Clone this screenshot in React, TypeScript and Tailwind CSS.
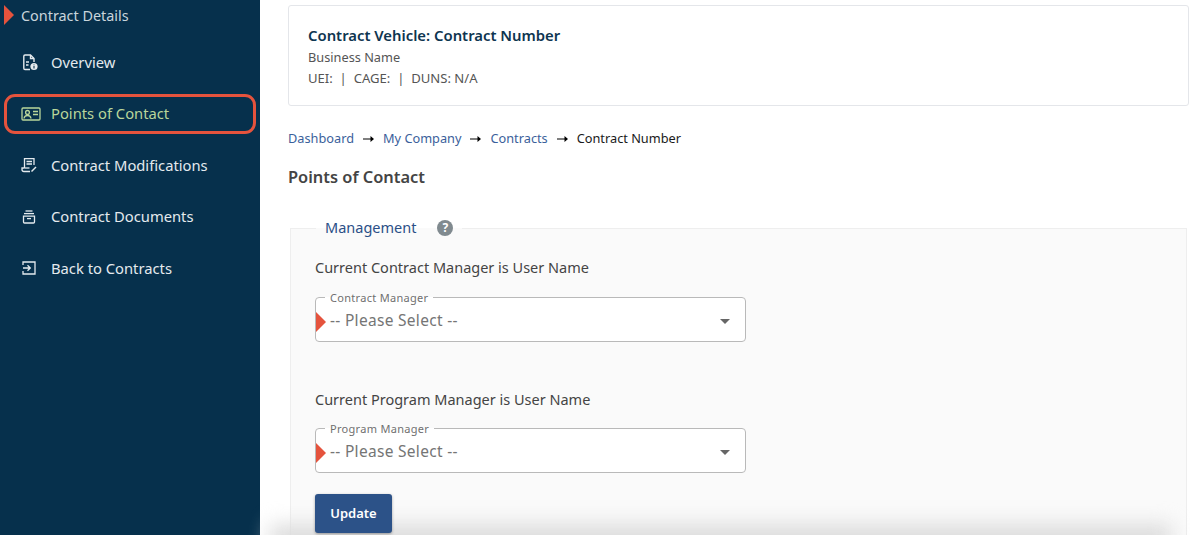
import React from "react";

const font = { fontFamily: '"Noto Sans", sans-serif' };

function OverviewIcon() {
  return (
    <svg width="16" height="17" viewBox="0 0 16 17" fill="none" stroke="currentColor" strokeWidth="1.4" className="ml-[1px]">
      <path d="M8 15.5H3a1.2 1.2 0 0 1-1.2-1.2V2.2A1.2 1.2 0 0 1 3 1h5.5L12 4.5V8" />
      <path d="M8.5 1v3.5H12" />
      <path d="M4 8h3M4 11h2.5" />
      <circle cx="12" cy="12.5" r="3.6" fill="currentColor" stroke="none" />
      <path d="M12 12v2.4M12 10.4v.8" stroke="#06304c" strokeWidth="1.1" />
    </svg>
  );
}

function ContactIcon() {
  return (
    <svg width="20" height="14" viewBox="0 0 20 14" fill="none" stroke="currentColor" strokeWidth="1.3">
      <rect x="1" y="1" width="18" height="12" rx="1" />
      <circle cx="6.5" cy="5.4" r="1.9" />
      <path d="M3 11.5c.3-2 1.7-3 3.5-3s3.200 1 3.500 3" />
      <path d="M12 4.500h5M12 7.500h5" />
    </svg>
  );
}

function ModificationsIcon() {
  return (
    <svg width="16" height="16" viewBox="0 0 16 16" fill="none" stroke="currentColor" strokeWidth="1.3">
      <path d="M3.500 11V1.700h9.500V8" />
      <path d="M5.500 4.500h5.500M5.500 7h5.500" />
      <path d="M3.500 11H1v1.500a2 2 0 0 0 2 2h6" />
      <path d="M3.500 11h5" />
      <path d="M10 14l4.500-4.500 1 1L11 15z" fill="currentColor" stroke="none" />
    </svg>
  );
}

function DocumentsIcon() {
  return (
    <svg width="14" height="14" viewBox="0 0 14 14" fill="none" stroke="currentColor" strokeWidth="1.3" className="ml-[1px]">
      <path d="M3.500 1h7" />
      <path d="M2 3.600h10" />
      <path d="M1.500 6.200h11V12a1 1 0 0 1-1 1h-9a1 1 0 0 1-1-1z" />
      <path d="M5 8.600h4" />
    </svg>
  );
}

function BackIcon() {
  return (
    <svg width="14" height="14" viewBox="0 0 14 14" fill="none" stroke="currentColor" strokeWidth="1.3" className="ml-[1px]">
      <path d="M1 4V1h12v12H1v-3" />
      <path d="M1 7h7M5.500 4.300L8.300 7l-2.800 2.700" />
    </svg>
  );
}

function Arrow() {
  return (
    <svg width="11" height="8" viewBox="0 0 11 8" className="mx-[9px] text-black" fill="currentColor">
      <path d="M0 3.400h7.500V1L11 4 7.500 7V4.600H0z" />
    </svg>
  );
}

function RedMarker({ className }: { className: string }) {
  return <div className={`absolute w-0 h-0 border-y-[10px] border-y-transparent border-l-[10px] border-l-[#e5533d] ${className}`} />;
}

function SelectBox({ label }: { label: string }) {
  return (
    <fieldset className="relative w-[431px] h-[50px] bg-white border border-[#b9b9b9] rounded-[4px] pl-[9px] pr-[5px]">
      <legend className="px-[5px] text-[11px] leading-[11px] text-[#6f6f6f] tracking-[0.3px]">{label}</legend>
      <div className="flex items-center justify-between pl-[5px] pr-[10px] h-[34px] mt-[1px]">
        <span className="text-[15.5px] tracking-[0.3px] text-[#757575]">-- Please Select --</span>
        <div className="w-0 h-0 border-x-[5px] border-x-transparent border-t-[5px] border-t-[#666666]" />
      </div>
      <RedMarker className="left-0 top-[9px]" />
    </fieldset>
  );
}

const navItems = [
  { label: "Overview", icon: <OverviewIcon /> },
  { label: "Points of Contact", icon: <ContactIcon />, active: true },
  { label: "Contract Modifications", icon: <ModificationsIcon /> },
  { label: "Contract Documents", icon: <DocumentsIcon /> },
  { label: "Back to Contracts", icon: <BackIcon /> },
];

export default function App() {
  return (
    <div style={font} className="relative flex w-[1196px] h-[535px] overflow-hidden bg-white">
      {/* Sidebar */}
      <aside className="relative w-[260px] h-full shrink-0 bg-[#06304c] pl-[5px] pr-[5px]">
        <div className="h-[43.5px] pt-[5px] pl-[16px] text-[14.4px] leading-[21px] text-[#c9d5dc]">Contract Details</div>
        <RedMarker className="left-[4px] top-[5px]" />
        <nav className="flex flex-col">
          {navItems.map((item) => (
            <div
              key={item.label}
              className={
                item.active
                  ? "flex items-center h-[40px] -mx-[1px] pl-[1px] -mt-[1.5px] mb-[13px] rounded-[11px] border-[3px] border-[#e5533d] text-[#b9d69a]"
                  : "flex items-center h-[37px] mb-[14.5px] border-[3px] border-transparent text-[#e4eaee]"
              }
            >
              <span className="w-[43px] pl-[13px] flex items-center shrink-0">{item.icon}</span>
              <span className="text-[14.75px] leading-none">{item.label}</span>
            </div>
          ))}
        </nav>
      </aside>

      {/* Main content */}
      <main className="flex-1 pl-[28px] pr-[7px] pt-[5px]">
        <section className="h-[101px] bg-white border border-[#e4e6ea] rounded-[3px] pl-[19px] pt-[18px]">
          <h1 className="text-[14.85px] leading-[23px] font-semibold text-[#0e3550]">Contract Vehicle: Contract Number</h1>
          <p className="text-[12.75px] leading-[21px] text-[#555555]">Business Name</p>
          <p className="text-[13.1px] leading-[21px] text-[#555555] whitespace-pre">UEI:  |  CAGE:  |  DUNS: N/A</p>
        </section>

        <div className="flex items-center h-[20px] mt-[23px] text-[12.75px]">
          <span className="text-[#3b5f9b]">Dashboard</span>
          <Arrow />
          <span className="text-[#3b5f9b]">My Company</span>
          <Arrow />
          <span className="text-[#3b5f9b]">Contracts</span>
          <Arrow />
          <span className="text-[#1a1a1a]">Contract Number</span>
        </div>

        <h2 className="mt-[16px] text-[16.4px] leading-[24px] font-semibold text-[#444444]">Points of Contact</h2>

        <fieldset className="mt-[28px] mx-[2px] h-[330px] bg-[#fafafa] border border-[#eeeeee] pl-[24px] pr-[24px]">
          <legend className="ml-[1px] px-[9px] flex items-center h-[22px]">
            <span className="text-[14.5px] text-[#2b4f87]">Management</span>
            <span className="ml-[21px] flex items-center justify-center w-[16px] h-[16px] rounded-full bg-[#808a8f] text-white text-[12px] leading-none font-bold">?</span>
          </legend>

          <p className="mt-[17px] text-[14.5px] leading-[22px] text-[#444444]">Current Contract Manager is User Name</p>
          <div className="mt-[14px]">
            <SelectBox label="Contract Manager" />
          </div>

          <p className="mt-[46px] text-[14.5px] leading-[22px] text-[#444444]">Current Program Manager is User Name</p>
          <div className="mt-[13px]">
            <SelectBox label="Program Manager" />
          </div>

          <button className="relative z-10 mt-[21px] w-[77px] h-[39px] pt-[1px] rounded-[3px] bg-[#2c5288] text-white text-[13px] font-semibold shadow-[0_1px_3px_rgba(0,0,0,0.35)]">
            Update
          </button>
        </fieldset>
      </main>

      {/* Blurred bottom edge */}
      <div className="absolute left-[270px] right-[25px] bottom-[-14px] h-[24px] bg-[#dadada] blur-[10px] pointer-events-none" />
    </div>
  );
}
